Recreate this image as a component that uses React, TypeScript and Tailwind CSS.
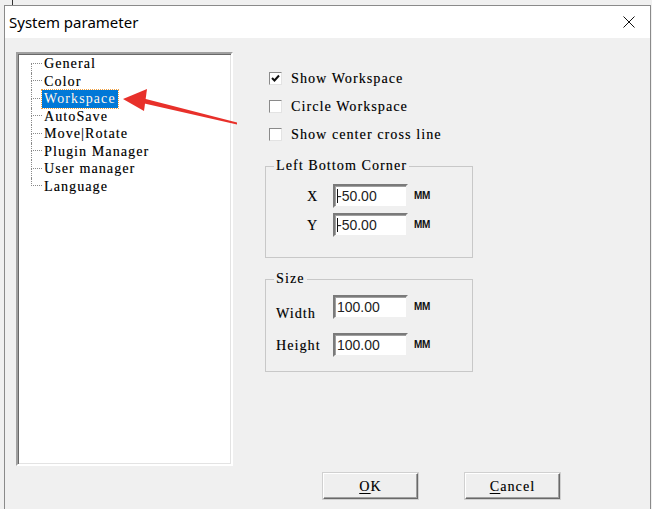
import React from "react";

/**
 * System parameter dialog
 * Classic Win32 property dialog: tree of pages on the left,
 * Workspace page settings on the right.
 */

const label =
  "font-['Liberation_Serif',serif] text-[14px] tracking-[1.1px] text-black [text-shadow:0.4px_0_0_rgba(0,0,0,0.35)]";

const treeItems = [
  "General",
  "Color",
  "Workspace",
  "AutoSave",
  "Move|Rotate",
  "Plugin Manager",
  "User manager",
  "Language",
];

function TreeRow({ text, index, last }: { text: string; index: number; last: boolean }) {
  const selected = text === "Workspace";
  return (
    <div className="flex h-[17.5px] items-stretch">
      {/* connector lines */}
      <div className="ml-[13px] flex w-[11px] flex-col">
        <div
          className={
            "h-1/2 border-b border-dotted border-b-[#8a8a8a] " +
            (index === 0 ? "" : "border-l border-dotted border-l-[#8a8a8a]")
          }
        />
        <div className={"h-1/2 " + (last ? "" : "border-l border-dotted border-l-[#8a8a8a]")} />
      </div>
      <div className="flex items-center">
        {selected ? (
          <span
            className={
              label +
              " flex h-[18px] items-center bg-[#0078d7] px-[2px] text-white outline outline-1 outline-dotted outline-[#f0a040]"
            }
          >
            {text}
          </span>
        ) : (
          <span className={label + " px-[2px]"}>{text}</span>
        )}
      </div>
    </div>
  );
}

function Checkbox({ checked, text }: { checked?: boolean; text: string }) {
  return (
    <div className="flex h-[18px] items-center">
      <div className="ml-[4px] flex h-[13px] w-[13px] items-center justify-center border border-t-[#8a8a8a] border-l-[#8a8a8a] border-b-[#e3e3e3] border-r-[#e3e3e3] bg-white">
        {checked && (
          <svg width="9" height="9" viewBox="0 0 9 9">
            <path d="M1 4 L3.5 6.5 L8 1.5" fill="none" stroke="#111" strokeWidth="2" />
          </svg>
        )}
      </div>
      <span className={label + " ml-[9px]"}>{text}</span>
    </div>
  );
}

function Field({ value, caret }: { value: string; caret?: boolean }) {
  return (
    <div className="flex h-[24px] w-[75px] items-center border-2 border-t-[#7a7a7a] border-l-[#7a7a7a] border-b-[#f0f0f0] border-r-[#f0f0f0] bg-white pl-[2px] shadow-[inset_1px_1px_0_#a0a0a0]">
      {caret && <span className="mr-[-1px] inline-block h-[14px] w-px bg-[#111]" />}
      <span className="font-['Liberation_Sans',Arial,sans-serif] text-[14px] leading-none text-[#222]">
        {value}
      </span>
    </div>
  );
}

function Unit() {
  return (
    <span className="ml-[6px] font-['Liberation_Sans',Arial,sans-serif] text-[10px] font-bold leading-none tracking-[-0.4px] text-[#111]">
      MM
    </span>
  );
}

function Legend({ text }: { text: string }) {
  return (
    <div className="-mt-[9px] flex h-[16px]">
      <span className={label + " ml-[8px] bg-[#f0f0f0] px-[2px] leading-[16px]"}>{text}</span>
    </div>
  );
}

function Button({ hot, rest }: { hot: string; rest: string }) {
  return (
    <button className="flex h-[26px] w-[95px] items-center justify-center border border-t-white border-l-white border-b-[#696969] border-r-[#696969] bg-[#efefef] shadow-[inset_-1px_-1px_0_#a0a0a0,0_0_0_1px_#d0d0d0]">
      <span className={label}>
        <span className="underline underline-offset-2">{hot}</span>
        {rest}
      </span>
    </button>
  );
}

export default function App() {
  return (
    <div className="relative h-[509px] overflow-hidden bg-[#f0f0f0] pl-[4px] pr-px pt-[5px]">
      {/* window behind */}
      <div className="absolute left-[12px] top-0 h-[5px] w-px bg-[#333]" />

      <div className="flex h-[510px] flex-col border border-[#8a8a8a] bg-[#f0f0f0]">
        {/* Title bar */}
        <div className="flex h-[32px] items-center justify-between bg-white pl-[4px] pr-[15px]">
          <span className="font-['Noto_Sans',sans-serif] text-[15px] text-black">System parameter</span>
          <svg width="12" height="12" viewBox="0 0 12 12">
            <path d="M0.5 0.5 L11.5 11.5 M11.5 0.5 L0.5 11.5" stroke="#111" strokeWidth="1" />
          </svg>
        </div>

        {/* Body */}
        <div className="flex pl-[11px] pt-[14px]">
          {/* Page tree */}
          <div className="h-[414px] w-[217px] border-2 border-t-[#a0a0a0] border-l-[#a0a0a0] border-b-white border-r-white bg-white pt-[1px] shadow-[inset_1px_1px_0_#696969,inset_-1px_-1px_0_#e3e3e3]">
            {treeItems.map((t, i) => (
              <TreeRow key={t} text={t} index={i} last={i === treeItems.length - 1} />
            ))}
          </div>

          {/* Workspace page */}
          <div className="ml-[32px] flex flex-1 flex-col">
            <div className="mt-[17px] flex flex-col gap-[10px]">
              <Checkbox checked text="Show Workspace" />
              <Checkbox text="Circle Workspace" />
              <Checkbox text="Show center cross line" />
            </div>

            {/* Left Bottom Corner */}
            <div className="mt-[23px] h-[92px] w-[208px] border border-[#c8c8c8]">
              <Legend text="Left Bottom Corner" />
              <div className="mt-[10px] flex flex-col gap-[5px]">
                <div className="flex items-center pl-[41px]">
                  <span className={label + " w-[26px]"}>X</span>
                  <Field value="-50.00" caret />
                  <Unit />
                </div>
                <div className="flex items-center pl-[41px]">
                  <span className={label + " w-[26px]"}>Y</span>
                  <Field value="-50.00" caret />
                  <Unit />
                </div>
              </div>
            </div>

            {/* Size */}
            <div className="mt-[21px] h-[93px] w-[208px] border border-[#c8c8c8]">
              <Legend text="Size" />
              <div className="mt-[8px] flex flex-col gap-[7px]">
                <div className="flex items-start pl-[10px]">
                  <span className={label + " mt-[7px] w-[57px] leading-[24px]"}>Width</span>
                  <Field value="100.00" />
                  <span className="flex h-[24px] items-center">
                    <Unit />
                  </span>
                </div>
                <div className="flex items-center pl-[10px]">
                  <span className={label + " w-[57px]"}>Height</span>
                  <Field value="100.00" />
                  <Unit />
                </div>
              </div>
            </div>

            {/* Dialog buttons */}
            <div className="ml-[58px] mt-[101px] flex gap-[47px]">
              <Button hot="O" rest="K" />
              <Button hot="C" rest="ancel" />
            </div>
          </div>
        </div>
      </div>

      {/* red annotation arrow */}
      <svg className="pointer-events-none absolute left-0 top-0" width="652" height="509">
        <polygon points="123,99 147,89 144,111" fill="#e8302a" />
        <polygon points="140,97.5 237,122.5 237,124.5 140,102.5" fill="#e8302a" />
      </svg>
    </div>
  );
}
